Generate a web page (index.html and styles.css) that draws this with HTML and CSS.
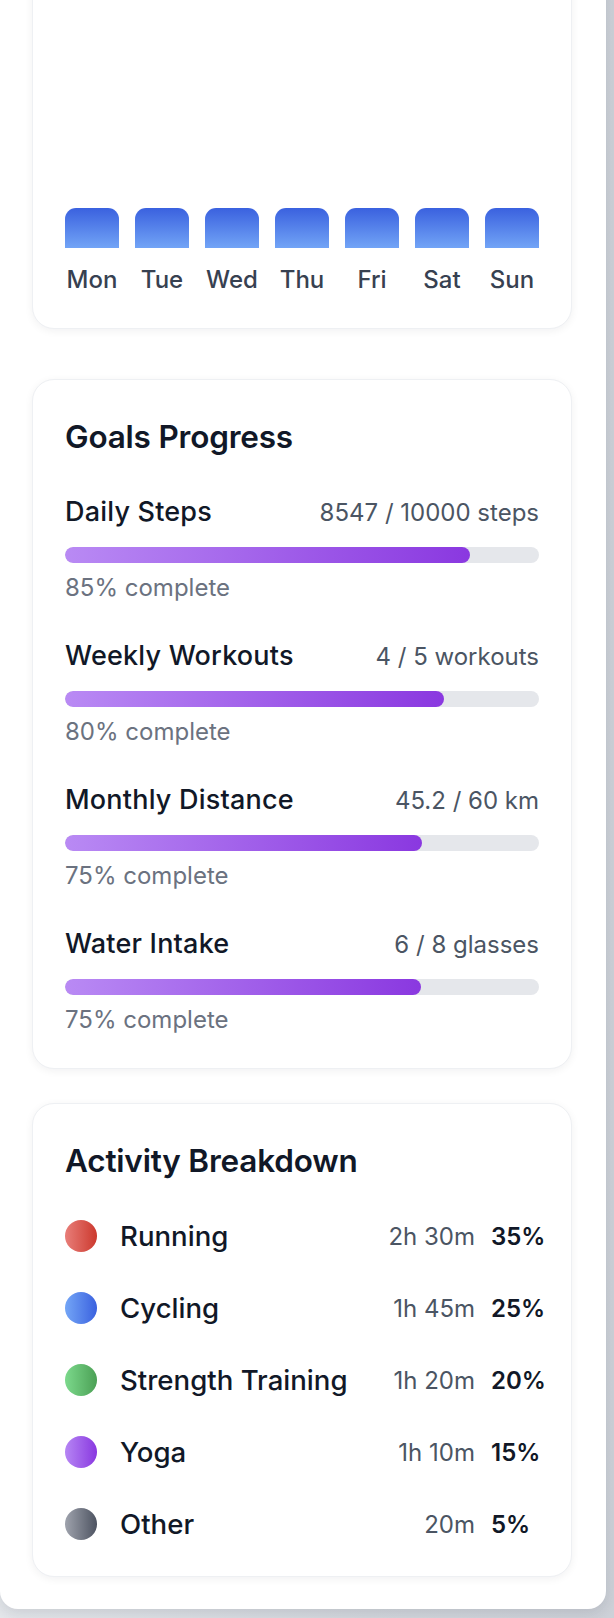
FILE: index.html
```html
<!DOCTYPE html>
<html lang="en">
<head>
<meta charset="utf-8">
<title>Fitness Dashboard</title>
<link rel="stylesheet" href="styles.css">
</head>
<body>
<div class="app">
  <section class="card card-chart">
    <div class="chart">
      <div class="day"><div class="bar"></div><span class="day-label">Mon</span></div>
      <div class="day"><div class="bar"></div><span class="day-label">Tue</span></div>
      <div class="day"><div class="bar"></div><span class="day-label">Wed</span></div>
      <div class="day"><div class="bar"></div><span class="day-label">Thu</span></div>
      <div class="day"><div class="bar"></div><span class="day-label">Fri</span></div>
      <div class="day"><div class="bar"></div><span class="day-label">Sat</span></div>
      <div class="day"><div class="bar"></div><span class="day-label">Sun</span></div>
    </div>
  </section>

  <section class="card card-goals">
    <h2 class="card-title">Goals Progress</h2>
    <div class="goals">
      <div class="goal">
        <div class="goal-head"><span class="goal-name">Daily Steps</span><span class="goal-value">8547 / 10000 steps</span></div>
        <div class="track"><div class="fill" style="width:85.47%"></div></div>
        <div class="goal-pct">85% complete</div>
      </div>
      <div class="goal">
        <div class="goal-head"><span class="goal-name">Weekly Workouts</span><span class="goal-value">4 / 5 workouts</span></div>
        <div class="track"><div class="fill" style="width:80%"></div></div>
        <div class="goal-pct">80% complete</div>
      </div>
      <div class="goal">
        <div class="goal-head"><span class="goal-name">Monthly Distance</span><span class="goal-value">45.2 / 60 km</span></div>
        <div class="track"><div class="fill" style="width:75.33%"></div></div>
        <div class="goal-pct">75% complete</div>
      </div>
      <div class="goal">
        <div class="goal-head"><span class="goal-name">Water Intake</span><span class="goal-value">6 / 8 glasses</span></div>
        <div class="track"><div class="fill" style="width:75%"></div></div>
        <div class="goal-pct">75% complete</div>
      </div>
    </div>
  </section>

  <section class="card card-activity">
    <h2 class="card-title">Activity Breakdown</h2>
    <div class="activities">
      <div class="activity"><span class="dot dot-red"></span><span class="act-name">Running</span><span class="act-time">2h 30m</span><span class="act-pct">35%</span></div>
      <div class="activity"><span class="dot dot-blue"></span><span class="act-name">Cycling</span><span class="act-time">1h 45m</span><span class="act-pct">25%</span></div>
      <div class="activity"><span class="dot dot-green"></span><span class="act-name">Strength Training</span><span class="act-time">1h 20m</span><span class="act-pct">20%</span></div>
      <div class="activity"><span class="dot dot-purple"></span><span class="act-name">Yoga</span><span class="act-time">1h 10m</span><span class="act-pct">15%</span></div>
      <div class="activity"><span class="dot dot-gray"></span><span class="act-name">Other</span><span class="act-time">20m</span><span class="act-pct">5%</span></div>
    </div>
  </section>
</div>
</body>
</html>
```

FILE: styles.css
```css
* { box-sizing: border-box; }

html, body {
  margin: 0;
  padding: 0;
}

body {
  font-family: "Inter", "Noto Sans", "Liberation Sans", sans-serif;
  background: linear-gradient(90deg, #e4e7eb 0%, #d3d7dd 60%, #cdd1d8 100%);
  min-height: 1618px;
  overflow: hidden;
}

.app {
  width: 606px;
  margin-top: -81px;
  background: #ffffff;
  border-radius: 0 0 18px 18px;
  padding: 0 34px 32px 32px;
  box-shadow: 0 4px 14px rgba(15, 23, 42, 0.12);
  display: flex;
  flex-direction: column;
}

.card {
  width: 540px;
  background: #ffffff;
  border: 1px solid #eef0f3;
  border-radius: 22px;
  box-shadow: 0 2px 8px rgba(15, 23, 42, 0.06);
  padding: 32px;
}

.card-chart { margin-bottom: 50px; }
.card-goals { margin-bottom: 34px; }

/* chart */
.chart {
  height: 344px;
  display: flex;
  gap: 16px;
  align-items: flex-end;
}

.day {
  flex: 1;
  display: flex;
  flex-direction: column;
  align-items: center;
}

.bar {
  width: 100%;
  height: 40px;
  border-radius: 11px 11px 0 0;
  background: linear-gradient(180deg, #3a61df 0%, #72a4f6 100%);
}

.day-label {
  margin-top: 16px;
  font-size: 24px;
  line-height: 32px;
  font-weight: 500;
  color: #374151;
}

/* titles */
.card-title {
  margin: 0 0 34px;
  padding-top: 2px;
  font-size: 31.5px;
  line-height: 46px;
  font-weight: 600;
  color: #111827;
  letter-spacing: -0.2px;
}

.card-activity .card-title { margin-bottom: 32px; }

/* goals */
.goals {
  display: flex;
  flex-direction: column;
  gap: 34px;
}

.goal-head {
  display: flex;
  justify-content: space-between;
  align-items: baseline;
  line-height: 36px;
}

.goal-name {
  font-size: 27px;
  font-weight: 500;
  letter-spacing: 0.2px;
  color: #111827;
}

.goal-value {
  font-size: 24px;
  font-weight: 400;
  color: #4b5563;
}

.track {
  margin-top: 16px;
  height: 16px;
  border-radius: 8px;
  background: #e5e7eb;
  overflow: hidden;
}

.fill {
  height: 100%;
  border-radius: 8px;
  background: linear-gradient(90deg, #b98af4 0%, #8a38e0 100%);
}

.goal-pct {
  margin-top: 9px;
  font-size: 24px;
  line-height: 32px;
  color: #6b7280;
}

/* activities */
.activities {
  display: flex;
  flex-direction: column;
  gap: 32px;
}

.activity {
  display: flex;
  align-items: center;
  height: 40px;
}

.dot {
  width: 32px;
  height: 32px;
  border-radius: 50%;
  flex: none;
  margin-right: 23px;
}

.dot-red { background: linear-gradient(90deg, #e87e79 0%, #cc392e 100%); }
.dot-blue { background: linear-gradient(90deg, #74a6f6 0%, #3a61df 100%); }
.dot-green { background: linear-gradient(90deg, #7cd98c 0%, #4ba055 100%); }
.dot-purple { background: linear-gradient(90deg, #b686f4 0%, #8938e0 100%); }
.dot-gray { background: linear-gradient(90deg, #9fa3ad 0%, #4d5361 100%); }

.act-name {
  flex: 1;
  font-size: 27.6px;
  font-weight: 500;
  color: #111827;
  white-space: nowrap;
}

.act-time {
  font-size: 24px;
  color: #4b5563;
  white-space: nowrap;
}

.act-pct {
  width: 48px;
  flex: none;
  margin-left: 16px;
  font-size: 24px;
  font-weight: 600;
  color: #111827;
  white-space: nowrap;
}
```
